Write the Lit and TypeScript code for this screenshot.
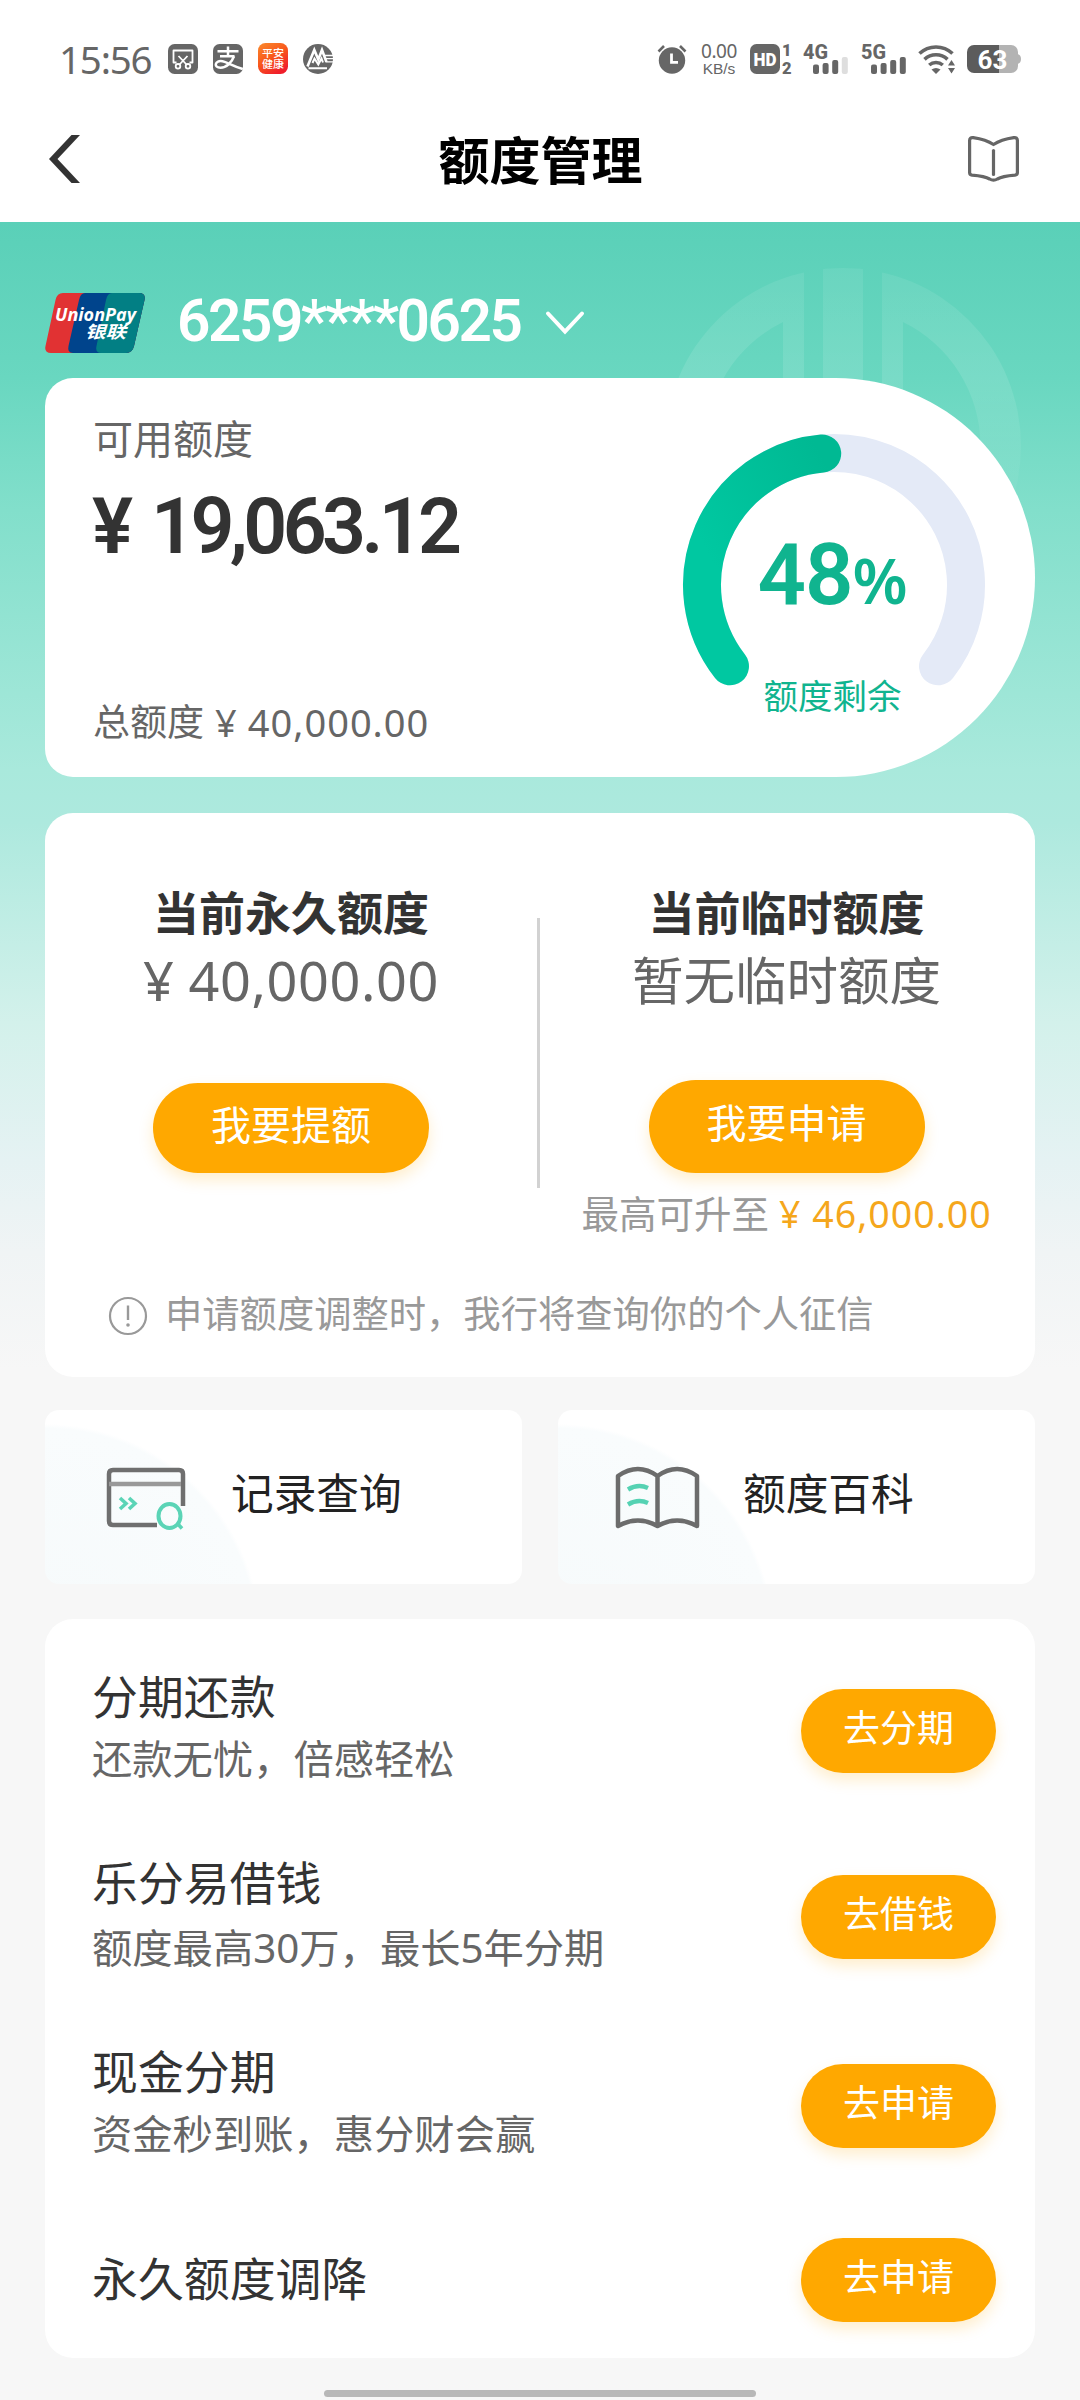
import { LitElement, html, css, svg, nothing } from "lit";
import { customElement, property } from "lit/decorators.js";

interface Offer {
  title: string;
  note?: string;
  action: string;
}

const OFFERS: Offer[] = [
  { title: "分期还款", note: "还款无忧，倍感轻松", action: "去分期" },
  { title: "乐分易借钱", note: "额度最高30万，最长5年分期", action: "去借钱" },
  { title: "现金分期", note: "资金秒到账，惠分财会赢", action: "去申请" },
  { title: "永久额度调降", action: "去申请" },
];

const base = css`
  :host {
    display: block;
    box-sizing: border-box;
    font-family: "Noto Sans", "Noto Sans CJK SC", sans-serif;
  }
  * {
    box-sizing: border-box;
  }
  svg {
    display: block;
    flex: none;
    overflow: visible;
  }
`;

@customElement("status-bar")
class StatusBar extends LitElement {
  static styles = [
    base,
    css`
      :host {
        height: 118px;
        padding: 0 59px 0 59px;
        display: flex;
        align-items: center;
        justify-content: space-between;
        color: #666;
      }
      .left,
      .right {
        display: flex;
        align-items: center;
      }
      .left {
        gap: 15px;
      }
      .time {
        width: 94px;
        font-size: 38.5px;
        line-height: 40px;
        letter-spacing: -1.2px;
        white-space: nowrap;
      }
      .speed {
        width: 40px;
        margin: 0 11px 0 12px;
        display: flex;
        flex-direction: column;
        align-items: center;
        gap: 3px;
      }
      .rate {
        font-size: 19px;
        line-height: 15px;
        letter-spacing: -0.4px;
      }
      .unit {
        font: 15.5px/13px "Liberation Sans", sans-serif;
      }
      .hd {
        margin-right: 10px;
      }
      .sig {
        margin-right: 12.5px;
      }
      .wifi {
        margin-right: 12px;
      }
    `,
  ];

  private signal(label: string, lit: number) {
    const tops = [21.5, 20, 17, 14];
    return html`<svg class="sig" width="45" height="32" viewBox="0 0 45 32">
      <text x="0" y="15.500" font-family="Roboto" font-weight="800" font-size="20" textLength="25" lengthAdjust="spacingAndGlyphs" fill="#666">${label}</text>
      ${tops.map(
        (t, i) => svg`<rect x=${10 + i * 9.6} y=${t} width="6" height=${31 - t} rx="2" fill=${i < lit ? "#666" : "#dedede"}></rect>`
      )}
    </svg>`;
  }

  render() {
    return html`
      <div class="left">
        <span class="time">15:56</span>
        <svg width="30" height="30" viewBox="0 0 30 30">
          <rect width="30" height="30" rx="6.5" fill="#666" />
          <g fill="none" stroke="#fff" stroke-width="1.8">
            <path d="M8.5 18.5H5.5V6.5h19v12h-3M10.5 12l8 8.5M19.5 12l-8 8.5" stroke-linejoin="round" />
            <circle cx="10" cy="22.3" r="2.3" />
            <circle cx="20" cy="22.3" r="2.3" />
          </g>
        </svg>
        <svg width="30" height="30" viewBox="0 0 30 30">
          <rect width="30" height="30" rx="6.5" fill="#666" />
          <g fill="none" stroke="#fff" stroke-width="2.5">
            <path d="M4.5 7.2h21M15 2.5v10M7 12.3h14.5" />
            <path d="M21 12.3c-2.200 6-7.500 11.500-13.500 11.500-3.500 0-5-1.800-4.700-3.700.400-2.300 3.200-3.600 6.700-2.900 5 1 9 4.500 20.300 7.800" />
          </g>
        </svg>
        <svg width="30" height="32" viewBox="0 0 30 32">
          <defs>
            <linearGradient id="pa" x1="0" y1="0" x2="0.6" y2="1">
              <stop offset="0" stop-color="#fb8a2c" />
              <stop offset="0.55" stop-color="#f8561c" />
              <stop offset="1" stop-color="#f01f2b" />
            </linearGradient>
          </defs>
          <rect width="30" height="31" rx="7.500" fill="url(#pa)" />
          <g fill="#fff" font-family="Noto Sans CJK SC" font-weight="500" font-size="10.500" text-anchor="middle">
            <text x="15" y="14" textLength="22" lengthAdjust="spacingAndGlyphs">平安</text>
            <text x="15" y="25" textLength="22" lengthAdjust="spacingAndGlyphs">健康</text>
          </g>
        </svg>
        <svg width="30" height="30" viewBox="0 0 30 30">
          <circle cx="15" cy="15" r="15" fill="#666" />
          <path d="M4.500 22.500L11.300 6l4 9.500L19 6l4.500 12" fill="none" stroke="#fff" stroke-width="2.600" />
          <path d="M9.500 19l2-4.500 3.800 6 3.200-6 1.500 4M5.500 24.200h18.500" fill="none" stroke="#fff" stroke-width="2" />
          <path d="M21 11.500h9M22 14.700h8M23 17.900h7" stroke="#fff" stroke-width="1.300" />
        </svg>
      </div>
      <div class="right">
        <svg width="30" height="30" viewBox="0 0 30 30">
          <circle cx="15" cy="16.500" r="13.200" fill="#666" />
          <path d="M1.500 7.500L7 2M28.500 7.500L23 2" stroke="#666" stroke-width="2.600" />
          <path d="M14.500 9.500v8.800h6.500" fill="none" stroke="#fff" stroke-width="2.800" />
        </svg>
        <div class="speed"><span class="rate">0.00</span><span class="unit">KB/s</span></div>
        <svg class="hd" width="43" height="30" viewBox="0 0 43 30">
          <rect width="30" height="30" rx="6.500" fill="#666" />
          <text x="15" y="22" text-anchor="middle" font-family="Roboto" font-weight="900" font-size="19" textLength="23" lengthAdjust="spacingAndGlyphs" fill="#fff">HD</text>
          <g font-family="Roboto" font-weight="900" font-size="16.500" fill="#666">
            <text x="32" y="12">1</text>
            <text x="32" y="30">2</text>
          </g>
        </svg>
        ${this.signal("4G", 3)} ${this.signal("5G", 4)}
        <svg class="wifi" width="37" height="30" viewBox="0 0 37 30">
          <g fill="none" stroke="#666" stroke-width="3.600">
            <path d="M1.500 9.500a24 24 0 0 1 33 0" />
            <path d="M6.500 15.300a17 17 0 0 1 23 0" />
            <path d="M11.200 21a10.500 10.500 0 0 1 13.600 0" />
          </g>
          <path d="M13.500 25.500q4.500-3 9 0L18 30z" fill="#666" />
          <path d="M30 21.500l3.500-5.500 3.500 5.500zM30 24l3.500 5.500 3.500-5.500z" fill="#666" />
        </svg>
        <svg width="54" height="28" viewBox="0 0 54 28">
          <path d="M32 0h12a7 7 0 0 1 7 7v14a7 7 0 0 1-7 7H32z" fill="#b3b3b3" />
          <path d="M50 9q4 .5 4 5t-4 5z" fill="#b3b3b3" />
          <path d="M7 0h25v28H7a7 7 0 0 1-7-7V7a7 7 0 0 1 7-7z" fill="#5c5c5c" />
          <text x="25.500" y="23.500" text-anchor="middle" font-family="Roboto" font-weight="700" font-size="26" fill="#fff">63</text>
        </svg>
      </div>
    `;
  }
}

@customElement("nav-bar")
class NavBar extends LitElement {
  @property() heading = "";
  static styles = [
    base,
    css`
      :host {
        height: 104px;
        padding: 0 60px 22px 47px;
        display: grid;
        grid-template-columns: 1fr auto 1fr;
        align-items: center;
      }
      .title {
        font-size: 51px;
        line-height: 60px;
        font-weight: 700;
        color: #000;
        transform: translate(7px, 1px);
      }
      .guide {
        justify-self: end;
      }
    `,
  ];
  render() {
    return html`
      <svg width="34" height="50" viewBox="0 0 34 50">
        <path d="M24.500 1H33L10.500 25 33 49h-8.500L2 25z" fill="#333" />
      </svg>
      <div class="title">${this.heading}</div>
      <svg class="guide" width="53" height="48" viewBox="0 0 53 48">
        <g fill="none" stroke="#666" stroke-width="3.200" stroke-linejoin="round" stroke-linecap="round">
          <path d="M26.500 9.500C19 4.500 12 3.500 6 2.600 3.800 2.300 2.600 3.500 2.600 5.500v32c0 1.500 1 2.500 2.500 2.700 7 .6 13 1.200 17.500 3.800q3.900 2.400 7.800 0c4.500-2.600 10.500-3.200 17.500-3.800 1.500-.2 2.500-1.200 2.500-2.700v-32c0-2-1.200-3.200-3.400-2.900-6 .9-13 1.900-20.500 6.900z" />
          <path d="M26.500 15.500v24" />
        </g>
      </svg>
    `;
  }
}

@customElement("card-picker")
class CardPicker extends LitElement {
  @property() number = "";
  static styles = [
    base,
    css`
      :host {
        display: flex;
        align-items: center;
        height: 156px;
        padding: 50px 0 4px;
      }
      .logo {
        overflow: hidden;
      }
      .number {
        position: relative;
        top: -2px;
        margin: 0 24px 0 32px;
        font: 600 58.5px/70px Roboto, "Noto Sans", sans-serif;
        letter-spacing: -2.4px;
        color: #fff;
      }
    `,
  ];
  render() {
    return html`
      <svg class="logo" width="100" height="60" viewBox="0 0 100 60">
        <defs>
          <clipPath id="logo"><path d="M18 0h76q7 0 5.500 7L89 53q-1.600 7-8 7H6q-7 0-5.500-7L10.500 7Q12 0 18 0z" /></clipPath>
        </defs>
        <g clip-path="url(#logo)">
          <rect width="100" height="60" fill="#e13233" />
          <path d="M44 0h56v60H28q-6 0-4.500-7L34 7q1.500-7 6-7z" fill="#00448c" />
          <path d="M70 0h40v60H56q-6 0-4.500-7L61 7q1.500-7 6-7z" fill="#027f84" />
        </g>
        <g fill="#fff" font-weight="700" font-style="italic">
          <text x="10" y="28" font-family="Open Sans" font-size="17.500" textLength="81" lengthAdjust="spacingAndGlyphs">UnionPay</text>
          <text x="40" y="45" font-family="Noto Sans CJK SC" font-size="17" textLength="41" lengthAdjust="spacingAndGlyphs">银联</text>
        </g>
      </svg>
      <span class="number">${this.number}</span>
      <svg width="40" height="26" viewBox="0 0 40 26">
        <path d="M3 3.500l17 18 17-18" fill="none" stroke="#fff" stroke-width="4" stroke-linecap="round" />
      </svg>
    `;
  }
}

@customElement("quota-gauge")
class QuotaGauge extends LitElement {
  @property({ type: Number }) percent = 0;
  static styles = [
    base,
    css`
      :host {
        width: 302px;
        height: 302px;
        display: grid;
        color: #10b48f;
      }
      .ring,
      .label {
        grid-area: 1 / 1;
      }
      .label {
        display: flex;
        flex-direction: column;
        align-items: center;
        padding: 91px 3px 0 0;
      }
      .value {
        font: 600 85px/100px Roboto, sans-serif;
        letter-spacing: -1px;
        white-space: nowrap;
      }
      .sign {
        font: 600 63px/80px "Noto Sans", sans-serif;
        letter-spacing: 0;
      }
      .caption {
        margin-top: 48px;
        font-size: 34.5px;
        line-height: 46px;
      }
    `,
  ];
  private point(deg: number) {
    const a = (deg * Math.PI) / 180;
    return `${(151 + 132 * Math.sin(a)).toFixed(2)} ${(151 - 132 * Math.cos(a)).toFixed(2)}`;
  }
  private arc(from: number, to: number) {
    return `M${this.point(from)}A132 132 0 ${to - from > 180 ? 1 : 0} 1 ${this.point(to)}`;
  }
  render() {
    const end = -128 + 2.56 * this.percent;
    return html`
      <svg class="ring" width="302" height="302" viewBox="0 0 302 302">
        <defs>
          <linearGradient id="g" gradientUnits="userSpaceOnUse" x1="0" y1="150" x2="160" y2="60">
            <stop offset="0.2" stop-color="#00c8a1" />
            <stop offset="1" stop-color="#00b993" />
          </linearGradient>
        </defs>
        <g fill="none" stroke-width="38" stroke-linecap="round">
          <path d=${this.arc(-128, 128)} stroke="#e4eaf7" />
          <path d=${this.arc(-128, end)} stroke="url(#g)" />
        </g>
      </svg>
      <div class="label">
        <div class="value">${this.percent}<span class="sign">%</span></div>
        <div class="caption">额度剩余</div>
      </div>
    `;
  }
}

@customElement("pill-button")
class PillButton extends LitElement {
  static styles = [
    base,
    css`
      :host {
        flex: none;
        display: flex;
        align-items: center;
        justify-content: center;
        width: 195px;
        height: 84px;
        padding-bottom: 7px;
        border-radius: 47px;
        background: #ffa800;
        box-shadow: 0 7px 15px rgba(255, 168, 0, 0.2);
        color: #fff;
        font-size: 37px;
        line-height: 50px;
      }
    `,
  ];
  render() {
    return html`<slot></slot>`;
  }
}

@customElement("app-root")
class AppRoot extends LitElement {
  static styles = [
    base,
    css`
      :host {
        width: 1080px;
        height: 2400px;
        overflow: hidden;
        background: #fff;
      }
      .body {
        position: relative;
        height: 2178px;
        padding: 0 45px 3px;
        display: flex;
        flex-direction: column;
        background: linear-gradient(
            180deg,
            #5ad0b8 0,
            #69d7c0 156px,
            #82dfcb 288px,
            #a9e9dc 548px,
            #ade9de 600px,
            #d3f1eb 800px,
            #e5f2f3 938px,
            #f0f4f5 1030px,
            #f7f7f7 1148px
          )
          #f7f7f7;
      }
      .mark {
        position: absolute;
        left: 665px;
        top: 46px;
      }
      .card {
        background: #fff;
        border-radius: 28px;
      }
      .summary {
        position: relative;
        flex: none;
        height: 399px;
        padding: 0 50px 0 48px;
        border-radius: 28px 200px 200px 28px;
        display: flex;
        justify-content: space-between;
      }
      .figures {
        display: flex;
        flex-direction: column;
      }
      .caption {
        margin-top: 36px;
        font-size: 40px;
        line-height: 50px;
        color: #666;
      }
      .available {
        margin-top: 23px;
        margin-left: -1px;
        display: flex;
        gap: 14px;
        font: 600 77px/80px Roboto, sans-serif;
        letter-spacing: -4.6px;
        color: #333;
      }
      .yen {
        width: 45px;
        letter-spacing: 0;
      }
      .total {
        margin-top: 130px;
        font-size: 38px;
        line-height: 50px;
        color: #666;
        display: flex;
        gap: 11px;
        white-space: nowrap;
      }
      .total .cn {
        font-size: 37px;
      }
      .digits {
        letter-spacing: 1px;
      }
      .gauge {
        margin-top: 56px;
      }
      .limits {
        flex: none;
        margin-top: 36px;
        height: 564px;
        padding-top: 67px;
        display: flex;
        flex-direction: column;
      }
      .columns {
        height: 391px;
        display: grid;
        grid-template-columns: 492px 3px 1fr;
      }
      .column {
        display: flex;
        flex-direction: column;
        align-items: center;
      }
      .temporary {
        padding-right: 2px;
      }
      .divider {
        margin-top: 38px;
        height: 270px;
        background: #d2d2d2;
      }
      .heading {
        font-size: 46px;
        line-height: 64px;
        font-weight: 700;
        color: #333;
      }
      .amount {
        height: 72px;
        margin-top: 1px;
        font-size: 51.5px;
        line-height: 70px;
        color: #666;
        white-space: nowrap;
        display: flex;
        gap: 14px;
      }
      .amount.money {
        font-size: 54px;
        letter-spacing: 0.6px;
      }
      .wide {
        width: 276px;
        height: 90px;
        margin-top: 66px;
        font-size: 40px;
      }
      .wide.tall {
        height: 93px;
        margin-top: 63px;
      }
      .boost {
        margin-top: 16px;
        font-size: 37.5px;
        line-height: 50px;
        color: #999;
        white-space: nowrap;
        display: flex;
        gap: 10px;
      }
      .boost .money {
        color: #f5a71c;
        letter-spacing: 1px;
        display: flex;
        gap: 11px;
      }
      .hint {
        display: flex;
        align-items: center;
        gap: 17px;
        padding-left: 63px;
        margin-top: 17px;
        font-size: 37.3px;
        line-height: 52px;
        color: #999;
        white-space: nowrap;
      }
      .hint svg {
        margin-top: 4px;
      }
      .shortcuts {
        flex: none;
        margin-top: 33px;
        display: grid;
        grid-template-columns: 1fr 1fr;
        gap: 36px;
      }
      .shortcut {
        height: 174px;
        border-radius: 14px;
        display: flex;
        align-items: center;
        font-size: 42.7px;
        line-height: 60px;
        color: #222;
        background: radial-gradient(circle 216px at 0 230px, #f6fafb 0, #f9fcfd 98%, #fff 100%);
      }
      .shortcut svg {
        margin-top: 4px;
      }
      .shortcut span {
        padding-bottom: 7px;
      }
      .offers {
        flex: none;
        margin-top: 35px;
        height: 739px;
        padding: 46px 39px 0 47px;
        display: flex;
        flex-direction: column;
      }
      .offer {
        height: 189px;
        display: flex;
        justify-content: space-between;
        align-items: flex-start;
      }
      .offer:first-child {
        height: 186px;
      }
      .offer pill-button {
        margin-top: 24px;
      }
      .offer .name {
        font-size: 45.9px;
        line-height: 62px;
        color: #333;
      }
      .offer .note {
        margin-top: 2px;
        font-size: 40.3px;
        line-height: 60px;
        color: #666;
      }
      .offer:nth-child(2) .note {
        margin-top: 5px;
      }
      .offer.single {
        height: 130px;
        align-items: center;
        margin-top: -14px;
      }
      .offer.single pill-button {
        margin-top: 0;
      }
      .offer.single .name {
        margin-top: -4px;
      }
      .home {
        flex: none;
        width: 432px;
        height: 7px;
        margin: auto auto 0;
        border-radius: 4px;
        background: #b8b8b8;
      }
    `,
  ];

  private offer(o: Offer) {
    return html`<div class="offer ${o.note ? "" : "single"}">
      <div>
        <div class="name">${o.title}</div>
        ${o.note ? html`<div class="note">${o.note}</div>` : nothing}
      </div>
      <pill-button>${o.action}</pill-button>
    </div>`;
  }

  render() {
    return html`
      <status-bar></status-bar>
      <nav-bar heading="额度管理"></nav-bar>
      <div class="body">
        <svg class="mark" width="356" height="356" viewBox="0 0 356 356">
          <defs>
            <clipPath id="disc"><circle cx="178" cy="178" r="178" /></clipPath>
            <clipPath id="sides"><path d="M0 0h139v356H0zM217 0h139v356H217z" /></clipPath>
            <linearGradient id="fade" x1="0" y1="0" x2="0" y2="1">
              <stop offset="0" stop-color="#fff" stop-opacity="0.07" />
              <stop offset="0.3" stop-color="#fff" stop-opacity="0.11" />
              <stop offset="0.6" stop-color="#fff" stop-opacity="0.04" />
            </linearGradient>
          </defs>
          <g fill="url(#fade)" clip-path="url(#disc)">
            <path d="M158 0h40v356h-40z" />
            <path clip-path="url(#sides)" fill-rule="evenodd" d="M0 0h356v356H0zM118 54V302A138 138 0 0 1 118 54zM238 54V302A138 138 0 0 0 238 54z" />
          </g>
        </svg>
        <card-picker number="6259****0625"></card-picker>
        <section class="card summary">
          <div class="figures">
            <div class="caption">可用额度</div>
            <div class="available"><span class="yen">¥</span><span>19,063.12</span></div>
            <div class="total"><span class="cn">总额度</span><span>¥</span><span class="digits">40,000.00</span></div>
          </div>
          <quota-gauge class="gauge" percent="48"></quota-gauge>
        </section>
        <section class="card limits">
          <div class="columns">
            <div class="column">
              <div class="heading">当前永久额度</div>
              <div class="amount money"><span>¥</span><span>40,000.00</span></div>
              <pill-button class="wide">我要提额</pill-button>
            </div>
            <div class="divider"></div>
            <div class="column temporary">
              <div class="heading">当前临时额度</div>
              <div class="amount">暂无临时额度</div>
              <pill-button class="wide tall">我要申请</pill-button>
              <div class="boost"><span>最高可升至</span><span class="money"><span>¥</span><span>46,000.00</span></span></div>
            </div>
          </div>
          <div class="hint">
            <svg width="40" height="40" viewBox="0 0 40 40">
              <circle cx="20" cy="20" r="18" fill="none" stroke="#999" stroke-width="2.200" />
              <path d="M20 9.500v14.500" stroke="#999" stroke-width="2.400" />
              <circle cx="20" cy="29" r="1.800" fill="#999" />
            </svg>
            <span>申请额度调整时，我行将查询你的个人征信</span>
          </div>
        </section>
        <section class="shortcuts">
          <div class="card shortcut">
            <svg width="186" height="68" viewBox="0 1 186 68">
              <g fill="none" stroke="#6f6f6f" stroke-width="4.500" stroke-linejoin="round">
                <path d="M112 61H68q-4 0-4-4V10q0-4 4-4h66q4 0 4 4v32" />
                <path d="M64 20h72" stroke="#999" />
              </g>
              <g fill="none" stroke="#5bd4b6" stroke-width="3.600">
                <path d="M75 34l6 5.500-6 5.500M84 34l6 5.500-6 5.500" />
                <ellipse cx="124.500" cy="52" rx="11" ry="12" stroke-width="4" />
                <path d="M132 59l5 5.500" />
              </g>
            </svg>
            <span>记录查询</span>
          </div>
          <div class="card shortcut">
            <svg width="185" height="68" viewBox="0 1 185 68">
              <path d="M60 12q20-14 39.500 0 19.500-14 39.500 0v50q-20-11-39.500 0-19.500-11-39.500 0zM99.500 12v50" fill="none" stroke="#6c6c6c" stroke-width="4.500" stroke-linejoin="round" />
              <path d="M70 25.500q10-6 20-1.500M70 40.500q10-6 20-1.500" fill="none" stroke="#55d2b3" stroke-width="4.500" />
            </svg>
            <span>额度百科</span>
          </div>
        </section>
        <section class="card offers">${OFFERS.map((o) => this.offer(o))}</section>
        <div class="home"></div>
      </div>
    `;
  }
}
